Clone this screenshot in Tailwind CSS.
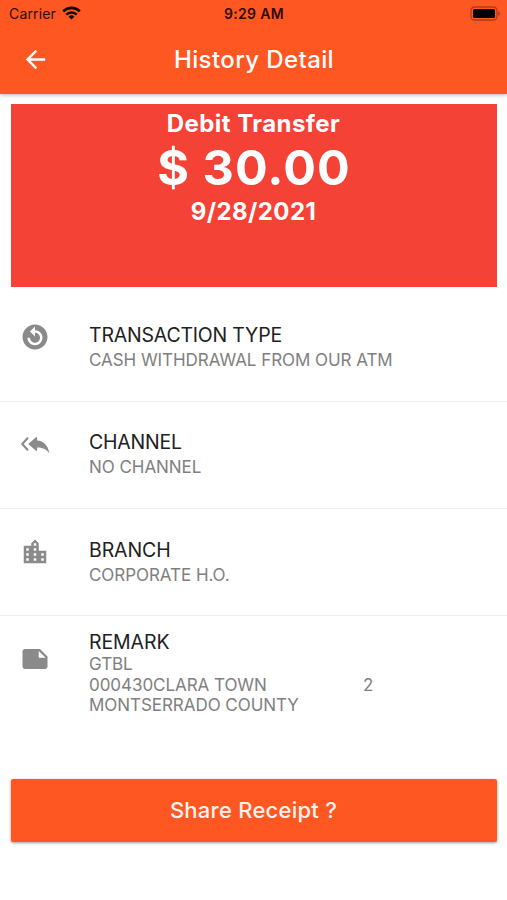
<!DOCTYPE html>
<html lang="en">
<head>
  <meta charset="UTF-8" />
  <meta name="viewport" content="width=device-width, initial-scale=1.0" />
  <title>History Detail</title>
  <script src="https://cdn.jsdelivr.net/npm/@tailwindcss/browser@4"></script>
</head>
<body class="bg-white font-['Inter','Liberation_Sans',sans-serif]">
  <div class="h-[900px] overflow-hidden flex flex-col">

    <header class="relative h-[94px] shrink-0 bg-[#ff5722] shadow-[0_1px_4px_rgba(0,0,0,0.3)]">
      <!-- status bar -->
      <div class="grid grid-cols-3 items-center h-[27px] pl-[9px] pr-[6px] text-[14px] text-[#2b0d03]">
        <div class="flex items-center gap-[6px]">
          <span class="tracking-[0.15px]">Carrier</span>
          <svg class="w-[19px] h-[14px] -mt-px" viewBox="0 0 19 14" fill="none" stroke="#120400" stroke-width="2.6">
            <path d="M1.2 5.3a11.8 11.8 0 0 1 16.6 0" />
            <path d="M4.3 8.6a7.4 7.4 0 0 1 10.4 0" />
            <path d="M9.5 13.6l-2.9-2.9a4.1 4.1 0 0 1 5.8 0z" fill="#120400" stroke="none" />
          </svg>
        </div>
        <span class="text-center font-semibold whitespace-nowrap tracking-[0.35px] -ml-[2px]">9:29 AM</span>
        <svg class="justify-self-end w-[31px] h-[15px]" viewBox="0 0 31 15">
          <rect x="1" y="1" width="26" height="13" rx="3.5" fill="none" stroke="#b03c18" stroke-width="1.3" />
          <rect x="3" y="3" width="22" height="9" rx="1.5" fill="#000" />
          <path d="M28.3 5.2v4.6c1.1-.4 1.7-1.3 1.7-2.3s-.6-1.9-1.7-2.3z" fill="#b03c18" />
        </svg>
      </div>
      <!-- app bar -->
      <div class="grid grid-cols-[70px_1fr_70px] items-center h-[66px]">
        <svg class="w-[29px] h-[29px] justify-self-center -mt-px" viewBox="0 0 24 24" fill="#fff">
          <path d="M20 11H7.83l5.59-5.59L12 4l-8 8 8 8 1.41-1.41L7.83 13H20v-2z" />
        </svg>
        <h1 class="text-center text-[24px] font-medium tracking-[0.4px] text-white pl-px">History Detail</h1>
      </div>
    </header>

    <section class="mt-[10px] mx-[10.5px] h-[183px] shrink-0 bg-[#f44336] text-white text-center font-bold">
      <p class="text-[24px] leading-[40px] tracking-[0.45px]">Debit Transfer</p>
      <p class="text-[48.5px] leading-[47px] tracking-[1.1px] pl-px">$ 30.00</p>
      <p class="text-[24px] leading-[41px] tracking-[0.4px]">9/28/2021</p>
    </section>

    <ul class="mt-[7px] text-[17px] leading-[21px] tracking-[-0.05px] text-[#808080]">
      <li class="flex h-[107.5px] border-b border-[#efefef] pt-[27px] pl-[20px]">
        <svg class="w-[30px] h-[30px] mt-px mr-[39px]" viewBox="0 0 24 24" fill="#8a8a8a">
          <path d="M12 2C6.48 2 2 6.48 2 12s4.48 10 10 10 10-4.48 10-10S17.52 2 12 2zm6 10.5c0 3.31-2.69 6-6 6s-6-2.69-6-6h2c0 2.21 1.79 4 4 4s4-1.79 4-4-1.79-4-4-4v3l-4-4 4-4v3c3.31 0 6 2.69 6 6z" />
        </svg>
        <div>
          <h2 class="text-[19.5px] leading-[28px] tracking-[-0.2px] mb-px text-[#212121]">TRANSACTION TYPE</h2>
          <p>CASH WITHDRAWAL FROM OUR ATM</p>
        </div>
      </li>
      <li class="flex h-[107px] border-b border-[#efefef] pt-[26.5px] pl-[20px]">
        <svg class="w-[30px] h-[30px] mt-px mr-[39px]" viewBox="0 0 30 30" fill="#8a8a8a">
          <path d="M7.500 9.300L2.200 15l5.300 5.700" fill="none" stroke="#8a8a8a" stroke-width="2.100" stroke-linecap="round" stroke-linejoin="round" />
          <path d="M8.200 15l7.800-6.700c.5-.4 1.100-.1 1.100.5v2.700c6.600.4 11.100 5.200 12.200 12.700-3.200-4.300-7-5.800-12.200-5.800v2.800c0 .6-.6.9-1.100.5z" />
        </svg>
        <div>
          <h2 class="text-[19.5px] leading-[28px] tracking-[-0.2px] mb-px text-[#212121]">CHANNEL</h2>
          <p>NO CHANNEL</p>
        </div>
      </li>
      <li class="flex h-[107px] border-b border-[#efefef] pt-[27px] pl-[20px]">
        <svg class="w-[30px] h-[30px] mt-px mr-[39px]" viewBox="0 0 24 24" fill="#8a8a8a">
          <path d="M15 11V5l-3-3-3 3v2H3v14h18V11h-6zm-8 8H5v-2h2v2zm0-4H5v-2h2v2zm0-4H5V9h2v2zm6 8h-2v-2h2v2zm0-4h-2v-2h2v2zm0-4h-2V9h2v2zm0-4h-2V5h2v2zm6 12h-2v-2h2v2zm0-4h-2v-2h2v2z" />
        </svg>
        <div>
          <h2 class="text-[19.5px] leading-[28px] tracking-[-0.1px] mb-px text-[#212121]">BRANCH</h2>
          <p>CORPORATE H.O.</p>
        </div>
      </li>
      <li class="flex pt-[13px] pl-[20px]">
        <svg class="w-[30px] h-[30px] mt-[15px] mr-[39px]" viewBox="0 0 24 24" fill="#8a8a8a">
          <path d="M22 10l-6-6H4c-1.100 0-2 .9-2 2v12.010c0 1.100.9 1.990 2 1.990l16-.01c1.100 0 2-.89 2-1.990v-8zm-7-4.500l5.500 5.500H15V5.500z" />
        </svg>
        <div>
          <h2 class="text-[19.5px] leading-[26px] tracking-[-0.1px] -mb-px text-[#212121]">REMARK</h2>
          <p>GTBL</p>
          <p class="flex leading-[20.5px]"><span class="w-[274px]">000430CLARA TOWN</span><span>2</span></p>
          <p class="leading-[20.5px]">MONTSERRADO COUNTY</p>
        </div>
      </li>
    </ul>

    <button class="mt-[63.5px] mx-[10.5px] h-[63px] shrink-0 rounded-[2px] bg-[#ff5722] text-[#fff3ee] text-[22px] font-medium tracking-[0.25px] shadow-[0_1px_3px_rgba(0,0,0,0.4)]">Share Receipt ?</button>
  </div>
</body>
</html>
